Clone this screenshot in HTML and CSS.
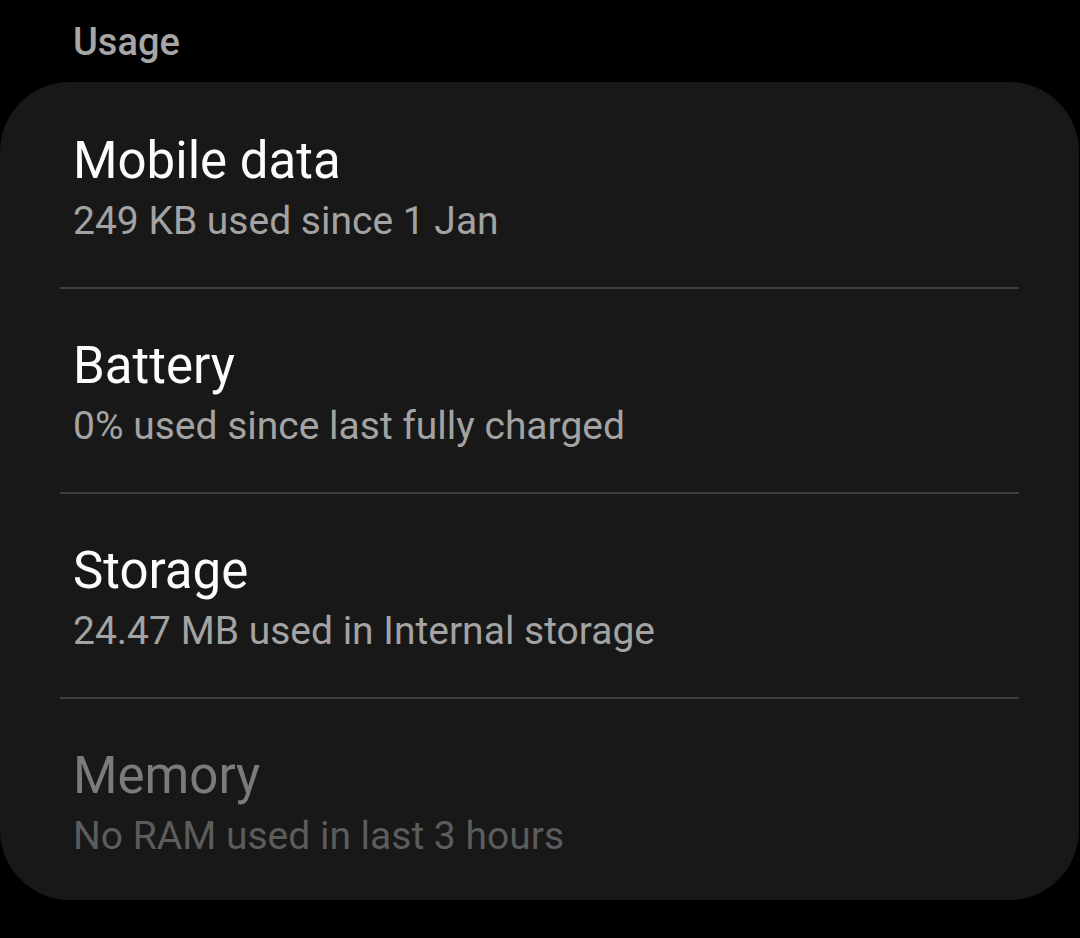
FILE: index.html
```html
<!DOCTYPE html>
<html lang="en">
<head>
<meta charset="utf-8">
<title>Usage</title>
<link rel="stylesheet" href="styles.css">
</head>
<body>
<div class="screen">
  <div class="section-title">Usage</div>
  <div class="card">
    <div class="row">
      <div class="row-title">Mobile data</div>
      <div class="row-sub">249 KB used since 1 Jan</div>
    </div>
    <div class="divider"></div>
    <div class="row">
      <div class="row-title">Battery</div>
      <div class="row-sub">0% used since last fully charged</div>
    </div>
    <div class="divider"></div>
    <div class="row">
      <div class="row-title">Storage</div>
      <div class="row-sub">24.47 MB used in Internal storage</div>
    </div>
    <div class="divider"></div>
    <div class="row row-disabled">
      <div class="row-title">Memory</div>
      <div class="row-sub">No RAM used in last 3 hours</div>
    </div>
  </div>
</div>
</body>
</html>
```

FILE: styles.css
```css
html, body {
  margin: 0;
  padding: 0;
  background: #000;
}

body {
  font-family: Roboto, "Noto Sans", "Liberation Sans", sans-serif;
  width: 1080px;
  height: 938px;
  overflow: hidden;
}

.screen {
  display: flex;
  flex-direction: column;
  padding-top: 22px;
}

.section-title {
  font-size: 38px;
  line-height: 40px;
  font-weight: 500;
  color: #a6a6a6;
  padding-left: 73px;
}

.card {
  margin-top: 20px;
  padding-top: 2px;
  width: 1079px;
  background: #181818;
  border-radius: 70px;
  display: flex;
  flex-direction: column;
}

.row {
  padding: 49px 73px 38px;
  display: flex;
  flex-direction: column;
}

.row:last-child {
  padding-bottom: 36px;
}

.row-title {
  font-size: 51px;
  line-height: 56px;
  color: #fcfcfc;
}

.row-sub {
  margin-top: 4px;
  font-size: 39px;
  line-height: 56px;
  color: #a3a3a3;
}

.row-disabled .row-title {
  color: #7b7b7b;
}

.row-disabled .row-sub {
  color: #5c5c5c;
}

.divider {
  height: 2px;
  margin: 0 60px;
  background: #3e3e3e;
}
```
